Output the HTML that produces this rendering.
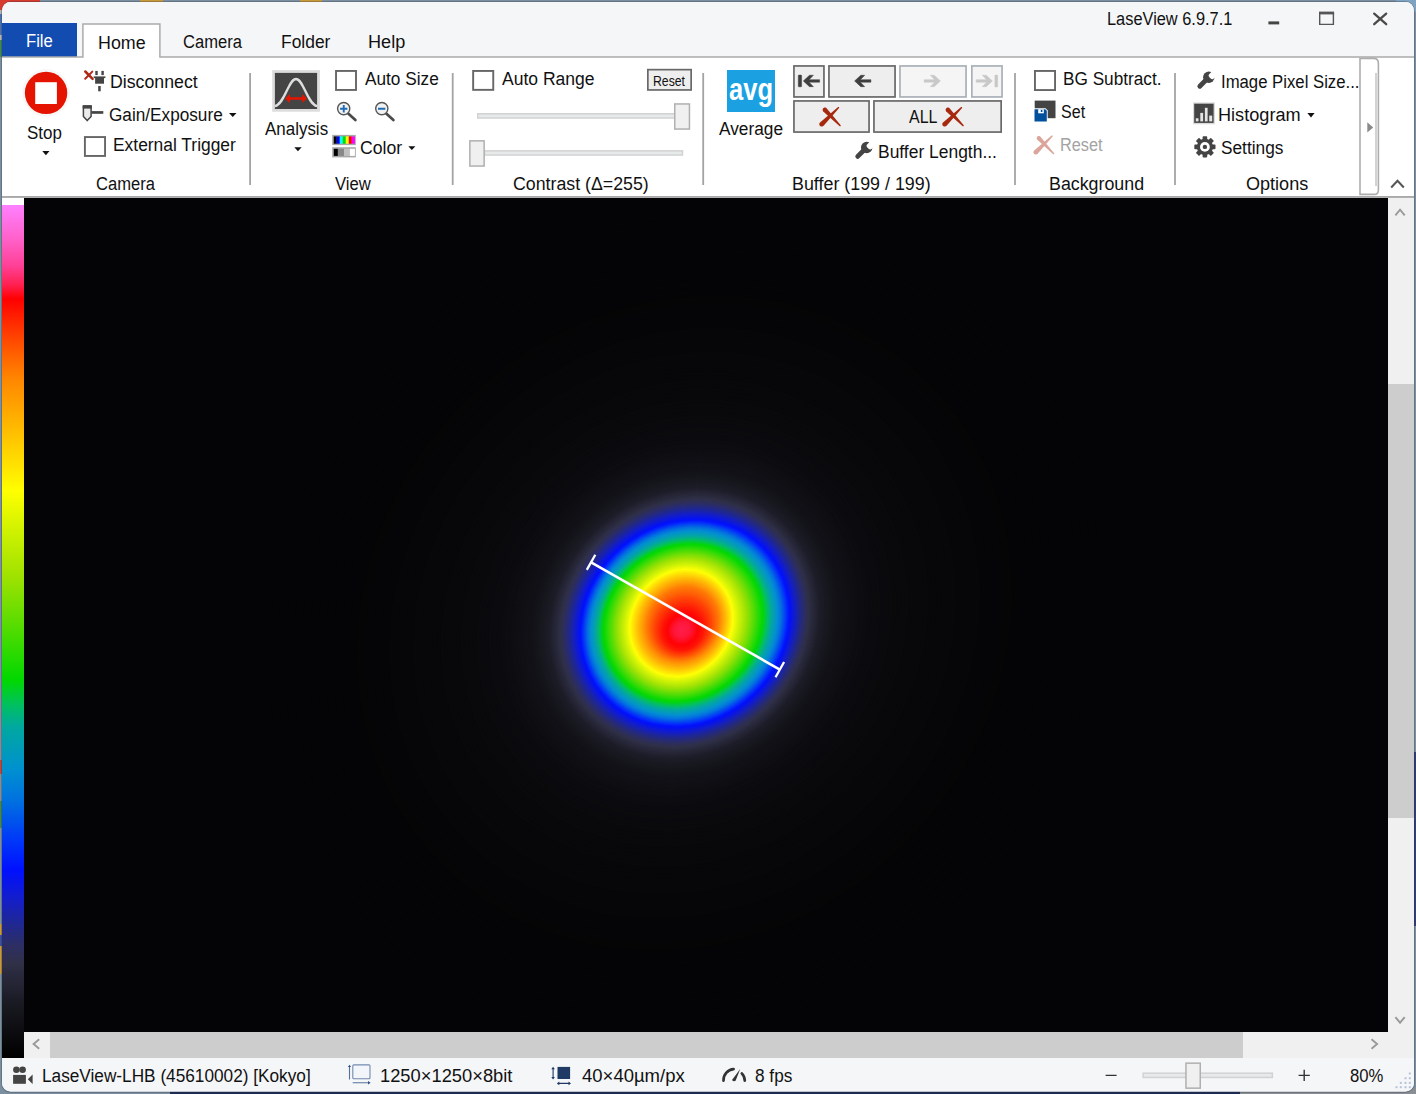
<!DOCTYPE html>
<html lang="en">
<head>
<meta charset="utf-8">
<title>LaseView 6.9.7.1</title>
<style>
html,body{margin:0;padding:0;}
body{width:1416px;height:1094px;overflow:hidden;position:relative;background:#7b8fa1;font-family:"Liberation Sans",sans-serif;}
.abs,.t,svg.i{position:absolute;}
.t{white-space:nowrap;transform-origin:0 0;display:block;}
#desktop{position:absolute;left:0;top:0;width:1416px;height:1094px;background:#7b8fa1;overflow:hidden;}
#win{position:absolute;left:0;top:0;width:1416px;height:1094px;background:#f5f6f8;clip-path:inset(2px 2px 2.5px 2px round 8.5px);}
#titlebar{left:0;top:0;width:1416px;height:57px;background:#f5f6f8;}
#ribbon{left:0;top:57px;width:1416px;height:140px;background:#fff;}
#filetab{left:2px;top:23px;width:74.8px;height:33.7px;background:#124cb0;}
#hometab{left:83px;top:24px;width:77px;height:34px;background:#fff;}
.trk{height:3.8px;border:1px solid #d6d6d6;background:#e7e7e7;}
.thm{box-sizing:border-box;border:1px solid #c4c4c4;background:#f0f0f0;}
#viewer{left:2px;top:198px;width:1412px;height:860px;background:#f0f0f0;}
#cbar{left:2px;top:198px;width:22.2px;height:860px;background:#fff;}
#cbar i{position:absolute;left:0;top:7px;width:22.2px;height:853px;background:linear-gradient(to bottom, #ff80ff 0px, #ff60c8 35px, #ff4096 61px, #ff2050 80px, #ff0000 94px, #ff3000 121px, #ff6000 149px, #ff8800 175px, #ffa800 206px, #ffc800 236px, #ffe800 266px, #ffff00 286px, #d0f200 325px, #a0e200 371px, #50dc00 425px, #00d800 475px, #00c060 500px, #00a8a0 522px, #0090d0 565px, #0070e0 596px, #0038f8 635px, #0010ff 665px, #141ec8 695px, #202890 720px, #2c2e64 740px, #303048 758px, #181820 802px, #000000 853px);}
#img{left:24.2px;top:198px;width:1363.8px;height:834px;background:#040406;overflow:hidden;}
#vscroll{left:1388px;top:198px;width:26px;height:834px;background:#f0f0f0;}
#hscroll{left:24.2px;top:1032px;width:1363.8px;height:26px;background:#f0f0f0;}
#status{left:0;top:1058px;width:1416px;height:36px;background:#f5f6f8;}
</style>
</head>
<body>
<div id="desktop">
<div class="abs" style="left:0;top:0;width:40px;height:14px;background:#d63b2e"></div>
<div class="abs" style="left:140px;top:0;width:23px;height:3px;background:#c8993a"></div>
<div class="abs" style="left:300px;top:0;width:22px;height:3px;background:#c8993a"></div>
<div class="abs" style="left:0;top:10px;width:3px;height:4px;background:#b4b4b4"></div>
<div class="abs" style="left:0;top:14px;width:3px;height:21px;background:#4a72b3"></div>
<div class="abs" style="left:0;top:35px;width:3px;height:5px;background:#b4b4b4"></div>
<div class="abs" style="left:0;top:40px;width:3px;height:17px;background:#3f8a52"></div>
<div class="abs" style="left:0;top:760px;width:3px;height:14px;background:#c0473a"></div>
<div class="abs" style="left:0;top:801px;width:3px;height:27px;background:#3f8a52"></div>
<div class="abs" style="left:0;top:924px;width:3px;height:11px;background:#c8993a"></div>
<div class="abs" style="left:0;top:935px;width:3px;height:11px;background:#3a50a0"></div>
<div class="abs" style="left:0;top:946px;width:3px;height:28px;background:#c8993a"></div>
<div class="abs" style="left:1396px;top:0;width:20px;height:12px;background:#7fa3c0"></div>
<div class="abs" style="left:1412px;top:752px;width:4px;height:174px;background:#2e3f74"></div>
<div class="abs" style="left:170px;top:1088px;width:1070px;height:6px;background:#1c2b55"></div>
<div class="abs" style="left:1240px;top:1088px;width:176px;height:6px;background:#8a8f96"></div>

<div class="abs" style="left:1px;top:1px;width:1414px;height:1091.6px;border-radius:10px;background:rgba(40,45,60,0.28)"></div>
</div>
<div id="win">
<div id="titlebar" class="abs"></div>
<div id="ribbon" class="abs"></div>
<div id="filetab" class="abs"></div>
<div id="hometab" class="abs"></div>
<!-- title bar controls -->
<svg class="i" style="left:1260px;top:6px" width="140" height="26" viewBox="1260 6 140 26">
  <rect x="1268.4" y="21.4" width="10.8" height="3" fill="#444"/>
  <path d="M1319.7 13.4H1333.4V24.4H1319.7Z" fill="none" stroke="#555" stroke-width="1.4"/>
  <rect x="1319" y="11.6" width="15.1" height="2.8" fill="#555"/>
  <path d="M1374.2 13.6L1386.2 24.2M1386.2 13.6L1374.2 24.2" stroke="#4a4a4a" stroke-width="2.3" stroke-linecap="round" fill="none"/>
</svg>

<!-- ribbon chrome: borders, separators, checkboxes, buttons, sliders -->
<svg class="i" id="chrome" style="left:0;top:0" width="1416" height="200" viewBox="0 0 1416 200">
<path d="M2 56.9H82.9V23.9H159.9V56.9H1414" fill="none" stroke="#ababab" stroke-width="1.5"/>
<rect x="2" y="196" width="1412" height="1.9" fill="#a9a9a9"/>
<rect x="249.20" y="73" width="1.8" height="112" fill="#a3a3a3"/>
<rect x="451.80" y="73" width="1.8" height="112" fill="#a3a3a3"/>
<rect x="702.30" y="73" width="1.8" height="112" fill="#a3a3a3"/>
<rect x="1014.10" y="73" width="1.8" height="112" fill="#a3a3a3"/>
<rect x="1174.10" y="73" width="1.8" height="112" fill="#a3a3a3"/>
<rect x="84.90" y="137.05" width="20.15" height="18.90" fill="#fff" stroke="#666" stroke-width="1.9"/>
<rect x="336.03" y="70.95" width="19.97" height="19.00" fill="#fff" stroke="#666" stroke-width="1.9"/>
<rect x="473.15" y="70.95" width="20.10" height="18.90" fill="#fff" stroke="#666" stroke-width="1.9"/>
<rect x="1034.95" y="70.95" width="20.10" height="19.10" fill="#fff" stroke="#666" stroke-width="1.9"/>
<rect x="647.85" y="69.65" width="43.30" height="20.30" fill="#eeeeee" stroke="#686868" stroke-width="1.7"/>
<rect x="477.75" y="113.75" width="197" height="4.3" fill="#e7eaea" stroke="#d2d2d2" stroke-width="1.5"/>
<rect x="674.75" y="103.95" width="14.7" height="25.1" fill="#f0f0f0" stroke="#b0b0b0" stroke-width="1.5"/>
<rect x="484.5" y="150.85" width="198" height="4.2" fill="#e7eaea" stroke="#d2d2d2" stroke-width="1.5"/>
<rect x="469.85" y="140.85" width="14.3" height="25.2" fill="#f0f0f0" stroke="#b0b0b0" stroke-width="1.5"/>
<rect x="793.95" y="65.95" width="30.00" height="31.00" fill="#eeeeee" stroke="#686868" stroke-width="1.7"/>
<rect x="828.95" y="65.95" width="66.10" height="31.00" fill="#eeeeee" stroke="#686868" stroke-width="1.7"/>
<rect x="899.95" y="65.95" width="66.10" height="31.00" fill="#f5f5f5" stroke="#a9b1b8" stroke-width="1.7"/>
<rect x="971.85" y="65.95" width="30.20" height="31.00" fill="#f5f5f5" stroke="#a9b1b8" stroke-width="1.7"/>
<rect x="793.95" y="100.95" width="75.10" height="31.10" fill="#eeeeee" stroke="#686868" stroke-width="1.7"/>
<rect x="873.95" y="100.95" width="127.20" height="31.10" fill="#eeeeee" stroke="#686868" stroke-width="1.7"/>
<path d="M1360 58.4V194.4H1374.2Q1378.4 194.4 1378.4 190.2V63.2Q1378.4 58.4 1373.6 58.4Z" fill="#fff" stroke="#adadad" stroke-width="1.6"/>
</svg>

<!-- ===== Camera group ===== -->
<svg class="i" style="left:20px;top:66px" width="54" height="54" viewBox="20 66 54 54">
  <circle cx="46.05" cy="92.9" r="23.8" fill="#f7f7f7"/>
  <circle cx="46.05" cy="92.9" r="21.2" fill="#e51400"/>
  <rect x="35.2" y="82.2" width="21.7" height="21.8" fill="#fff"/>
</svg>
<svg class="i" style="left:40px;top:149px" width="12" height="8" viewBox="40 149 12 8"><path d="M42.3 151H49.5L45.9 155.3Z" fill="#111"/></svg>
<!-- disconnect icon -->
<svg class="i" style="left:82px;top:68px" width="26" height="26" viewBox="82 68 26 26">
  <path d="M85.3 71.5L92.6 78.9" stroke="#b02a17" stroke-width="2.5" stroke-linecap="round"/>
  <path d="M92.3 71.6L85.2 78.8" stroke="#b02a17" stroke-width="2" stroke-linecap="round"/>
  <rect x="95.3" y="70.9" width="2.4" height="4.2" fill="#444"/>
  <rect x="101.4" y="70.9" width="2.4" height="4.2" fill="#444"/>
  <rect x="93.7" y="76.4" width="11.7" height="1.7" fill="#444"/>
  <rect x="95.1" y="78" width="8.9" height="5.7" fill="#444"/>
  <rect x="98.2" y="86" width="2.5" height="5.3" fill="#444"/>
</svg>
<!-- gain icon -->
<svg class="i" style="left:80px;top:103px" width="26" height="21" viewBox="80 103 26 21">
  <path d="M83.4 106V116.5L87.2 120.6L91.1 116.5V106Z" fill="#ebebeb" stroke="#444" stroke-width="1.5" stroke-linejoin="round"/>
  <rect x="82.7" y="105.3" width="9.1" height="3.3" fill="#444"/>
  <rect x="91.5" y="111.1" width="11.8" height="2.7" fill="#444"/>
</svg>
<svg class="i" style="left:227px;top:111px" width="12" height="8" viewBox="227 111 12 8"><path d="M229 113.1H236.5L232.75 117Z" fill="#111"/></svg>

<!-- ===== View group ===== -->
<svg class="i" style="left:270px;top:68px" width="52" height="46" viewBox="270 68 52 46">
  <rect x="272.2" y="70.1" width="47.7" height="41.6" fill="#dcdcdc"/>
  <rect x="274.9" y="72.9" width="42.2" height="36.1" fill="#444"/>
  <path d="M274.9 106.2C285 103.5 288.5 79 296 79C303.5 79 307 103.5 317.1 106.2" fill="none" stroke="#dedede" stroke-width="2.3"/>
  <path d="M285.1 98.5L290 93.9V97.15H302.3V93.9L306.9 98.5L302.3 103V99.85H290V103Z" fill="#e51400"/>
</svg>
<svg class="i" style="left:292px;top:145px" width="12" height="8" viewBox="292 145 12 8"><path d="M294.3 147.3H301.6L297.95 151.2Z" fill="#111"/></svg>
<!-- zoom in / out -->
<svg class="i" style="left:334px;top:99px" width="64" height="24" viewBox="334 99 64 24">
  <path d="M348.2 113.4L355.4 120" stroke="#4a4a4a" stroke-width="2.7" stroke-linecap="round"/>
  <circle cx="343.7" cy="108.6" r="6.1" fill="#f2f2f2" stroke="#555" stroke-width="1.4"/>
  <path d="M340.1 108.7H347.4M343.75 105V112.4" stroke="#1e6bb8" stroke-width="1.9"/>
  <path d="M386.2 113.4L393.4 120" stroke="#4a4a4a" stroke-width="2.7" stroke-linecap="round"/>
  <circle cx="381.8" cy="108.6" r="6.1" fill="#f2f2f2" stroke="#555" stroke-width="1.4"/>
  <path d="M378 108.7H385.4" stroke="#1e6bb8" stroke-width="1.9"/>
</svg>
<!-- colour icon -->
<svg class="i" style="left:331px;top:134px" width="26" height="25" viewBox="331 134 26 25">
  <rect x="332.2" y="134.9" width="23.6" height="10.2" fill="#a8a8a8"/>
  <rect x="333.8" y="136.4" width="3" height="7.3" fill="#000"/>
  <rect x="336.8" y="136.4" width="3" height="7.3" fill="#0000ff"/>
  <rect x="339.8" y="136.4" width="3" height="7.3" fill="#00ffff"/>
  <rect x="342.8" y="136.4" width="3" height="7.3" fill="#00e000"/>
  <rect x="345.8" y="136.4" width="3" height="7.3" fill="#ffff00"/>
  <rect x="348.8" y="136.4" width="3" height="7.3" fill="#ff0000"/>
  <rect x="351.8" y="136.4" width="3.1" height="7.3" fill="#ff00ff"/>
  <rect x="332.2" y="147.2" width="23.6" height="10.2" fill="#a8a8a8"/>
  <rect x="333.8" y="148.8" width="4.1" height="7.1" fill="#000"/>
  <rect x="337.9" y="148.8" width="6.1" height="7.1" fill="#888"/>
  <rect x="344" y="148.8" width="5.9" height="7.1" fill="#c0c0c0"/>
  <rect x="349.9" y="148.8" width="5" height="7.1" fill="#fff"/>
</svg>
<svg class="i" style="left:406px;top:144px" width="12" height="8" viewBox="406 144 12 8"><path d="M408.3 146.2H415.4L411.85 150.1Z" fill="#111"/></svg>

<!-- ===== Contrast group ===== -->

<!-- ===== Buffer group ===== -->
<div class="abs" style="left:727.1px;top:70px;width:48px;height:41.8px;background:#1ba1e2"></div>
<svg class="i" style="left:795px;top:70px" width="206" height="60" viewBox="795 70 206 60">
  <g fill="#3f3f3f" stroke="#3f3f3f" stroke-width="0.5" stroke-linejoin="round">
    <rect x="798.3" y="75.1" width="3.3" height="11.7" rx="0.6"/>
    <path d="M803.30 80.95L809.50 75.25L813.40 75.25L809.05 79.70L819.60 79.70L819.60 82.20L809.05 82.20L813.40 86.65L809.50 86.65Z"/>
    <path d="M854.60 80.95L860.80 75.25L864.70 75.25L860.35 79.70L870.90 79.70L870.90 82.20L860.35 82.20L864.70 86.65L860.80 86.65Z"/>
  </g>
  <g fill="#c8c8c8" stroke="#c8c8c8" stroke-width="0.5" stroke-linejoin="round">
    <path d="M940.40 80.95L934.20 75.25L930.30 75.25L934.65 79.70L924.10 79.70L924.10 82.20L934.65 82.20L930.30 86.65L934.20 86.65Z"/>
    <path d="M992.40 80.95L986.20 75.25L982.30 75.25L986.65 79.70L976.10 79.70L976.10 82.20L986.65 82.20L982.30 86.65L986.20 86.65Z"/>
    <rect x="994.9" y="75.1" width="2.8" height="11.9" rx="0.5"/>
  </g>
  <g id="redx" fill="#a5280f">
    <path d="M823.24 111.39L822.83 110.80L822.62 110.11L822.64 109.39L822.87 108.71L823.31 108.14L823.90 107.73L824.59 107.52L825.31 107.54L825.99 107.77L826.56 108.21L840.71 125.32L840.68 126.31L839.69 126.28Z"/>
    <path d="M823.38 125.91L822.77 126.35L822.05 126.57L821.30 126.57L820.59 126.33L819.99 125.88L819.55 125.27L819.33 124.55L819.33 123.80L819.57 123.09L820.02 122.49L838.11 107.10L839.10 107.11L839.09 108.10Z"/>
  </g>
  <use href="#redx" x="123" y="0"/>
</svg>
<!-- wrench (buffer length) -->
<svg class="i" style="left:853px;top:140px" width="22" height="21" viewBox="853 140 22 21">
  <g id="wrench" transform="translate(855 142)">
    <path d="M2.7 14.4L9.6 7.5" stroke="#444" stroke-width="4.8" stroke-linecap="round" fill="none"/>
    <circle cx="11.7" cy="5.5" r="5.7" fill="#444"/>
    <path d="M12.3 2.2L16 -1.5L20.5 3L16.8 6.7A2.25 2.25 0 0 1 13.6 6.7L12.3 5.4A2.25 2.25 0 0 1 12.3 2.2Z" fill="#fff"/>
  </g>
</svg>

<!-- ===== Background group ===== -->
<svg class="i" style="left:1032px;top:99px" width="26" height="24" viewBox="1032 99 26 24">
  <rect x="1034.7" y="100.6" width="20.8" height="17.6" fill="#444"/>
  <path d="M1033.6 108.3H1045.6L1047.7 110.4V122.3H1033.6Z" fill="#fff"/>
  <path d="M1034.5 109.2H1045.2L1046.8 110.8V121.4H1034.5Z" fill="#00509e"/>
  <rect x="1038.2" y="109.2" width="5.6" height="4.1" fill="#fff"/>
  <rect x="1040.8" y="109.8" width="1.6" height="2.2" fill="#00509e"/>
</svg>
<svg class="i" style="left:1031px;top:133px" width="26" height="24" viewBox="1031 133 26 24">
  <g fill="#dba59b" transform="translate(1033.3 135.2) scale(0.965 0.975) translate(-819.1 -106.7)">
    <path d="M823.24 111.39L822.83 110.80L822.62 110.11L822.64 109.39L822.87 108.71L823.31 108.14L823.90 107.73L824.59 107.52L825.31 107.54L825.99 107.77L826.56 108.21L840.71 125.32L840.68 126.31L839.69 126.28Z"/>
    <path d="M823.38 125.91L822.77 126.35L822.05 126.57L821.30 126.57L820.59 126.33L819.99 125.88L819.55 125.27L819.33 124.55L819.33 123.80L819.57 123.09L820.02 122.49L838.11 107.10L839.10 107.11L839.09 108.10Z"/>
  </g>
</svg>

<!-- ===== Options group ===== -->
<svg class="i" style="left:1195px;top:70px" width="22" height="21" viewBox="1195 70 22 21">
  <use href="#wrench" x="342.1" y="-70.2"/>
</svg>
<svg class="i" style="left:1192px;top:101px" width="25" height="25" viewBox="1192 101 25 25">
  <rect x="1193" y="102.4" width="22" height="21.9" fill="#d9d9d9"/>
  <rect x="1194.2" y="103.7" width="19.4" height="19.2" fill="#444"/>
  <rect x="1195.8" y="118.3" width="2.7" height="3.1" fill="#e4e4e4"/>
  <rect x="1200.3" y="112.9" width="2.8" height="8.5" fill="#e4e4e4"/>
  <rect x="1204.9" y="107.8" width="2.7" height="13.6" fill="#e4e4e4"/>
  <rect x="1209.2" y="115.6" width="3" height="5.8" fill="#e4e4e4"/>
</svg>
<svg class="i" style="left:1306px;top:111px" width="12" height="8" viewBox="1306 111 12 8"><path d="M1307.4 113H1314.6L1311 117.4Z" fill="#111"/></svg>
<svg class="i" style="left:1192px;top:134px" width="26" height="26" viewBox="1192 134 26 26">
  <g transform="translate(1204.9 146.9)" fill="#444">
    <g id="tooth"><rect x="-2.3" y="-10.6" width="4.6" height="21.2" rx="0.8"/></g>
    <use href="#tooth" transform="rotate(45)"/>
    <use href="#tooth" transform="rotate(90)"/>
    <use href="#tooth" transform="rotate(135)"/>
    <circle r="8.1"/>
    <circle r="4.9" fill="#fff"/>
    <circle r="2.2"/>
  </g>
</svg>

<!-- ribbon scroll button & collapse chevron -->
<div class="abs" style="left:1374.8px;top:73px;width:1.8px;height:112.5px;background:#d2d2d2"></div>
<svg class="i" style="left:1365px;top:120px" width="12" height="14" viewBox="1365 120 12 14"><path d="M1367.3 122.3L1373.2 127.4L1367.3 132.5Z" fill="#8a8a8a"/></svg>
<svg class="i" style="left:1388px;top:176px" width="20" height="14" viewBox="1388 176 20 14"><path d="M1391.2 187.4L1397.5 180.8L1403.8 187.4" fill="none" stroke="#555" stroke-width="2.1"/></svg>

<div id="viewer" class="abs"></div>
<div id="cbar" class="abs"><i></i></div>
<div id="img" class="abs">
<svg class="i" style="left:0;top:0" width="1363.8" height="834" viewBox="24.2 198 1363.8 834">
  <rect x="24" y="198" width="1364" height="834" fill="#040406"/>
  <g id="beam" transform="translate(684 623) rotate(-45) scale(1.045 0.952) rotate(45) translate(-683 -622)"><ellipse cx="683.7" cy="622.0" rx="416.0" ry="416.0" fill="#040406"/><ellipse cx="683.7" cy="622.0" rx="408.0" ry="408.0" fill="#040406"/><ellipse cx="683.7" cy="622.0" rx="400.0" ry="400.0" fill="#040406"/><ellipse cx="683.7" cy="622.0" rx="392.0" ry="392.0" fill="#040406"/><ellipse cx="683.7" cy="622.0" rx="384.0" ry="384.0" fill="#040406"/><ellipse cx="683.7" cy="622.0" rx="376.0" ry="376.0" fill="#040406"/><ellipse cx="683.7" cy="622.0" rx="368.0" ry="368.0" fill="#040406"/><ellipse cx="683.7" cy="622.0" rx="360.0" ry="360.0" fill="#040406"/><ellipse cx="683.7" cy="622.0" rx="352.0" ry="352.0" fill="#040406"/><ellipse cx="683.7" cy="622.0" rx="344.0" ry="344.0" fill="#040406"/><ellipse cx="683.7" cy="622.0" rx="336.0" ry="336.0" fill="#040406"/><ellipse cx="683.7" cy="622.0" rx="328.0" ry="328.0" fill="#050506"/><ellipse cx="683.7" cy="622.0" rx="320.0" ry="320.0" fill="#050507"/><ellipse cx="683.7" cy="622.0" rx="312.0" ry="312.0" fill="#050507"/><ellipse cx="683.7" cy="622.0" rx="304.0" ry="304.0" fill="#050507"/><ellipse cx="683.7" cy="622.0" rx="296.0" ry="296.0" fill="#060608"/><ellipse cx="683.7" cy="622.0" rx="288.0" ry="288.0" fill="#060608"/><ellipse cx="683.7" cy="622.0" rx="280.0" ry="280.0" fill="#060608"/><ellipse cx="683.7" cy="622.0" rx="272.0" ry="272.0" fill="#070709"/><ellipse cx="683.7" cy="622.0" rx="264.0" ry="264.0" fill="#070709"/><ellipse cx="683.7" cy="622.0" rx="256.0" ry="256.0" fill="#070709"/><ellipse cx="683.7" cy="622.0" rx="252.0" ry="252.0" fill="#07070a"/><ellipse cx="683.7" cy="622.0" rx="248.0" ry="248.0" fill="#07070a"/><ellipse cx="683.7" cy="622.0" rx="244.0" ry="244.0" fill="#08080a"/><ellipse cx="683.7" cy="622.0" rx="240.0" ry="240.0" fill="#08080a"/><ellipse cx="683.7" cy="622.0" rx="236.0" ry="236.0" fill="#08080b"/><ellipse cx="683.7" cy="622.0" rx="232.0" ry="232.0" fill="#08080b"/><ellipse cx="683.7" cy="622.0" rx="228.0" ry="228.0" fill="#08080b"/><ellipse cx="683.7" cy="622.0" rx="224.0" ry="224.0" fill="#09090b"/><ellipse cx="683.7" cy="622.0" rx="220.0" ry="220.0" fill="#09090c"/><ellipse cx="683.7" cy="622.0" rx="216.0" ry="216.0" fill="#09090c"/><ellipse cx="683.7" cy="622.0" rx="212.0" ry="212.0" fill="#09090c"/><ellipse cx="683.7" cy="622.0" rx="208.0" ry="208.0" fill="#0a0a0d"/><ellipse cx="683.7" cy="622.0" rx="204.0" ry="204.0" fill="#0a0a0d"/><ellipse cx="683.7" cy="622.0" rx="200.0" ry="200.0" fill="#0a0a0e"/><ellipse cx="683.7" cy="622.0" rx="196.0" ry="196.0" fill="#0b0b0e"/><ellipse cx="683.7" cy="622.0" rx="192.0" ry="192.0" fill="#0b0b0f"/><ellipse cx="683.7" cy="622.0" rx="188.0" ry="188.0" fill="#0b0b0f"/><ellipse cx="683.7" cy="622.0" rx="184.0" ry="184.0" fill="#0c0c10"/><ellipse cx="683.7" cy="622.0" rx="180.0" ry="180.0" fill="#0c0c11"/><ellipse cx="683.7" cy="622.0" rx="176.0" ry="176.0" fill="#0d0d11"/><ellipse cx="683.7" cy="622.0" rx="174.0" ry="174.0" fill="#0e0e12"/><ellipse cx="683.7" cy="622.0" rx="172.0" ry="172.0" fill="#0e0e13"/><ellipse cx="683.7" cy="622.0" rx="170.0" ry="170.0" fill="#0e0e13"/><ellipse cx="683.7" cy="622.0" rx="168.0" ry="168.0" fill="#0f0f14"/><ellipse cx="683.7" cy="622.0" rx="166.0" ry="166.0" fill="#0f0f14"/><ellipse cx="683.7" cy="622.0" rx="164.0" ry="164.0" fill="#101015"/><ellipse cx="683.7" cy="622.0" rx="162.0" ry="162.0" fill="#101016"/><ellipse cx="683.7" cy="622.0" rx="160.0" ry="160.0" fill="#111116"/><ellipse cx="683.7" cy="622.0" rx="158.0" ry="158.0" fill="#111117"/><ellipse cx="683.7" cy="622.0" rx="156.0" ry="156.0" fill="#111117"/><ellipse cx="683.7" cy="622.0" rx="154.0" ry="154.0" fill="#121218"/><ellipse cx="683.7" cy="622.0" rx="152.0" ry="152.0" fill="#131319"/><ellipse cx="683.7" cy="622.0" rx="150.0" ry="150.0" fill="#14141b"/><ellipse cx="683.7" cy="622.0" rx="148.0" ry="148.0" fill="#15151c"/><ellipse cx="683.7" cy="622.0" rx="146.0" ry="146.0" fill="#17171e"/><ellipse cx="683.7" cy="622.0" rx="144.0" ry="144.0" fill="#181820"/><ellipse cx="683.7" cy="622.0" rx="142.0" ry="142.0" fill="#191922"/><ellipse cx="683.7" cy="622.0" rx="140.0" ry="140.0" fill="#1b1b25"/><ellipse cx="683.7" cy="622.0" rx="138.0" ry="138.0" fill="#1c1c26"/><ellipse cx="683.7" cy="622.0" rx="137.0" ry="137.0" fill="#1d1d28"/><ellipse cx="683.7" cy="622.0" rx="136.0" ry="136.0" fill="#1d1d29"/><ellipse cx="683.7" cy="622.0" rx="135.0" ry="135.0" fill="#1f1f2b"/><ellipse cx="683.7" cy="622.0" rx="134.0" ry="134.0" fill="#20202e"/><ellipse cx="683.7" cy="622.0" rx="133.0" ry="133.0" fill="#222230"/><ellipse cx="683.7" cy="622.0" rx="132.0" ry="132.0" fill="#242433"/><ellipse cx="683.7" cy="622.0" rx="131.0" ry="131.0" fill="#252536"/><ellipse cx="683.7" cy="622.0" rx="130.0" ry="130.0" fill="#272739"/><ellipse cx="683.7" cy="622.0" rx="129.0" ry="129.0" fill="#29293c"/><ellipse cx="683.7" cy="622.0" rx="128.0" ry="128.0" fill="#2a2a3e"/><ellipse cx="683.7" cy="622.0" rx="127.0" ry="127.0" fill="#2c2c41"/><ellipse cx="683.7" cy="622.0" rx="126.0" ry="126.0" fill="#2e2e44"/><ellipse cx="683.7" cy="622.0" rx="125.0" ry="125.0" fill="#2f2f47"/><ellipse cx="683.7" cy="622.0" rx="124.0" ry="124.0" fill="#2f304c"/><ellipse cx="683.7" cy="622.0" rx="123.0" ry="123.0" fill="#2f2f52"/><ellipse cx="683.8" cy="622.0" rx="122.1" ry="121.9" fill="#2e2f59"/><ellipse cx="683.8" cy="622.0" rx="121.1" ry="120.9" fill="#2d2e5f"/><ellipse cx="683.8" cy="622.1" rx="120.1" ry="119.9" fill="#2b2e66"/><ellipse cx="683.8" cy="622.1" rx="119.1" ry="118.9" fill="#292c6f"/><ellipse cx="683.9" cy="622.1" rx="118.2" ry="117.8" fill="#272b78"/><ellipse cx="683.9" cy="622.1" rx="117.2" ry="116.8" fill="#242a81"/><ellipse cx="683.9" cy="622.1" rx="116.2" ry="115.8" fill="#22298a"/><ellipse cx="683.9" cy="622.1" rx="115.2" ry="114.8" fill="#1f2793"/><ellipse cx="684.0" cy="622.1" rx="114.3" ry="113.7" fill="#1d269e"/><ellipse cx="684.0" cy="622.2" rx="113.3" ry="112.7" fill="#1b24a9"/><ellipse cx="684.0" cy="622.2" rx="112.3" ry="111.7" fill="#1822b4"/><ellipse cx="684.0" cy="622.2" rx="111.3" ry="110.7" fill="#161fc0"/><ellipse cx="684.1" cy="622.2" rx="110.3" ry="109.7" fill="#131dcb"/><ellipse cx="684.1" cy="622.2" rx="109.4" ry="108.6" fill="#101bd4"/><ellipse cx="684.1" cy="622.2" rx="108.4" ry="107.6" fill="#0c19dd"/><ellipse cx="684.1" cy="622.3" rx="107.4" ry="106.6" fill="#0916e7"/><ellipse cx="684.2" cy="622.3" rx="106.4" ry="105.6" fill="#0514f0"/><ellipse cx="684.2" cy="622.3" rx="105.4" ry="104.6" fill="#0411f9"/><ellipse cx="684.2" cy="622.3" rx="104.5" ry="103.5" fill="#0415fe"/><ellipse cx="684.1" cy="622.3" rx="103.5" ry="102.5" fill="#0421fc"/><ellipse cx="684.0" cy="622.3" rx="102.5" ry="101.5" fill="#042dfa"/><ellipse cx="684.0" cy="622.3" rx="101.5" ry="100.5" fill="#043af7"/><ellipse cx="683.9" cy="622.2" rx="100.5" ry="99.5" fill="#0447f2"/><ellipse cx="683.8" cy="622.2" rx="99.5" ry="98.5" fill="#0454ec"/><ellipse cx="683.7" cy="622.2" rx="98.5" ry="97.5" fill="#0461e6"/><ellipse cx="683.6" cy="622.2" rx="97.5" ry="96.5" fill="#046ee1"/><ellipse cx="683.6" cy="622.2" rx="96.5" ry="95.5" fill="#0478dc"/><ellipse cx="683.5" cy="622.2" rx="95.5" ry="94.5" fill="#0480d8"/><ellipse cx="683.4" cy="622.1" rx="94.5" ry="93.5" fill="#0489d4"/><ellipse cx="683.3" cy="622.1" rx="93.5" ry="92.5" fill="#0491cf"/><ellipse cx="683.2" cy="622.1" rx="92.5" ry="91.5" fill="#0495c5"/><ellipse cx="683.2" cy="622.1" rx="91.5" ry="90.5" fill="#049abc"/><ellipse cx="683.1" cy="622.1" rx="90.5" ry="89.5" fill="#049fb3"/><ellipse cx="683.0" cy="622.1" rx="89.5" ry="88.5" fill="#04a3a9"/><ellipse cx="682.9" cy="622.0" rx="88.5" ry="87.5" fill="#04a8a0"/><ellipse cx="682.8" cy="622.0" rx="87.5" ry="86.5" fill="#04ae90"/><ellipse cx="682.8" cy="622.0" rx="86.5" ry="85.5" fill="#04b47f"/><ellipse cx="682.7" cy="622.0" rx="85.5" ry="84.5" fill="#04bb6e"/><ellipse cx="682.6" cy="622.0" rx="84.5" ry="83.5" fill="#04c15d"/><ellipse cx="682.5" cy="622.0" rx="83.5" ry="82.5" fill="#04c647"/><ellipse cx="682.4" cy="621.9" rx="82.5" ry="81.5" fill="#04cc32"/><ellipse cx="682.4" cy="621.9" rx="81.5" ry="80.5" fill="#04d11c"/><ellipse cx="682.3" cy="621.9" rx="80.5" ry="79.5" fill="#04d706"/><ellipse cx="682.2" cy="621.9" rx="79.5" ry="78.5" fill="#08d806"/><ellipse cx="682.1" cy="621.9" rx="78.4" ry="77.6" fill="#13d906"/><ellipse cx="682.1" cy="621.9" rx="77.3" ry="76.7" fill="#1fda06"/><ellipse cx="682.0" cy="621.9" rx="76.2" ry="75.8" fill="#2ada06"/><ellipse cx="681.9" cy="621.9" rx="75.2" ry="74.8" fill="#35db06"/><ellipse cx="681.9" cy="621.9" rx="74.1" ry="73.9" fill="#40db06"/><ellipse cx="681.8" cy="621.9" rx="73.0" ry="73.0" fill="#4bdc06"/><ellipse cx="681.8" cy="621.9" rx="71.9" ry="72.1" fill="#56dc06"/><ellipse cx="681.7" cy="621.9" rx="70.9" ry="71.1" fill="#61dd06"/><ellipse cx="681.6" cy="621.9" rx="69.8" ry="70.2" fill="#6bde06"/><ellipse cx="681.6" cy="621.9" rx="68.7" ry="69.3" fill="#75df06"/><ellipse cx="681.5" cy="621.9" rx="67.7" ry="68.3" fill="#80e006"/><ellipse cx="681.4" cy="621.9" rx="66.6" ry="67.4" fill="#8ae006"/><ellipse cx="681.4" cy="621.9" rx="65.6" ry="66.5" fill="#94e106"/><ellipse cx="681.3" cy="621.9" rx="64.5" ry="65.5" fill="#9fe206"/><ellipse cx="681.2" cy="621.9" rx="63.4" ry="64.6" fill="#a7e406"/><ellipse cx="681.2" cy="621.9" rx="62.4" ry="63.6" fill="#aee706"/><ellipse cx="681.1" cy="621.9" rx="61.3" ry="62.7" fill="#b6e906"/><ellipse cx="681.0" cy="621.9" rx="60.3" ry="61.7" fill="#bdec06"/><ellipse cx="681.0" cy="621.9" rx="59.2" ry="60.8" fill="#c4ee06"/><ellipse cx="680.9" cy="621.9" rx="58.2" ry="59.8" fill="#ccf106"/><ellipse cx="680.9" cy="621.9" rx="57.1" ry="58.9" fill="#d4f306"/><ellipse cx="680.8" cy="621.9" rx="56.1" ry="57.9" fill="#ddf506"/><ellipse cx="680.7" cy="621.9" rx="55.1" ry="57.0" fill="#e5f806"/><ellipse cx="680.7" cy="621.9" rx="54.0" ry="56.0" fill="#eefa06"/><ellipse cx="680.6" cy="621.9" rx="53.0" ry="55.0" fill="#f6fd06"/><ellipse cx="680.5" cy="621.9" rx="52.0" ry="54.1" fill="#ffff06"/><ellipse cx="680.5" cy="621.9" rx="51.0" ry="53.1" fill="#fff606"/><ellipse cx="680.6" cy="622.0" rx="50.0" ry="52.0" fill="#ffed06"/><ellipse cx="680.7" cy="622.0" rx="49.1" ry="50.9" fill="#ffe406"/><ellipse cx="680.8" cy="622.0" rx="48.1" ry="49.9" fill="#ffdc06"/><ellipse cx="680.9" cy="622.1" rx="47.2" ry="48.8" fill="#ffd406"/><ellipse cx="681.0" cy="622.1" rx="46.2" ry="47.8" fill="#ffcb06"/><ellipse cx="681.1" cy="622.2" rx="45.3" ry="46.7" fill="#ffc306"/><ellipse cx="681.2" cy="622.2" rx="44.3" ry="45.7" fill="#ffbb06"/><ellipse cx="681.3" cy="622.2" rx="43.4" ry="44.7" fill="#ffb306"/><ellipse cx="681.4" cy="622.3" rx="42.4" ry="43.6" fill="#ffab06"/><ellipse cx="681.5" cy="622.3" rx="41.4" ry="42.6" fill="#ffa406"/><ellipse cx="681.6" cy="622.3" rx="40.5" ry="41.5" fill="#ff9c06"/><ellipse cx="681.7" cy="622.4" rx="39.5" ry="40.5" fill="#ff9406"/><ellipse cx="681.8" cy="622.4" rx="38.6" ry="39.4" fill="#ff8d06"/><ellipse cx="681.9" cy="622.5" rx="37.6" ry="38.4" fill="#ff8406"/><ellipse cx="682.0" cy="622.5" rx="36.6" ry="37.4" fill="#ff7b06"/><ellipse cx="682.0" cy="622.9" rx="35.7" ry="36.3" fill="#ff7506"/><ellipse cx="682.1" cy="623.2" rx="34.7" ry="35.3" fill="#ff6e06"/><ellipse cx="682.1" cy="623.6" rx="33.7" ry="34.3" fill="#ff6806"/><ellipse cx="682.1" cy="624.0" rx="32.8" ry="33.3" fill="#ff6106"/><ellipse cx="682.2" cy="624.4" rx="31.8" ry="32.2" fill="#ff5a06"/><ellipse cx="682.2" cy="624.8" rx="30.8" ry="31.2" fill="#ff5306"/><ellipse cx="682.2" cy="625.1" rx="29.8" ry="30.2" fill="#ff4b06"/><ellipse cx="682.2" cy="625.5" rx="28.9" ry="29.1" fill="#ff4506"/><ellipse cx="682.3" cy="625.9" rx="27.9" ry="28.1" fill="#ff3f06"/><ellipse cx="682.3" cy="626.2" rx="26.9" ry="27.1" fill="#ff3906"/><ellipse cx="682.3" cy="626.6" rx="25.9" ry="26.1" fill="#ff3306"/><ellipse cx="682.4" cy="627.0" rx="24.9" ry="25.1" fill="#ff2c06"/><ellipse cx="682.4" cy="627.4" rx="24.0" ry="24.0" fill="#ff2606"/><ellipse cx="682.4" cy="627.8" rx="23.0" ry="23.0" fill="#ff2006"/><ellipse cx="682.5" cy="628.1" rx="22.0" ry="22.0" fill="#ff1a06"/><ellipse cx="682.5" cy="628.5" rx="21.0" ry="21.0" fill="#ff1406"/><ellipse cx="682.4" cy="628.5" rx="20.0" ry="20.0" fill="#ff1106"/><ellipse cx="682.4" cy="628.5" rx="19.0" ry="19.0" fill="#ff0d06"/><ellipse cx="682.3" cy="628.6" rx="18.0" ry="18.0" fill="#ff0906"/><ellipse cx="682.3" cy="628.6" rx="17.0" ry="17.0" fill="#ff0506"/><ellipse cx="682.2" cy="628.6" rx="16.0" ry="16.0" fill="#ff0406"/><ellipse cx="682.1" cy="628.6" rx="15.0" ry="15.0" fill="#ff0409"/><ellipse cx="682.1" cy="628.6" rx="14.0" ry="14.0" fill="#ff0813"/><ellipse cx="682.0" cy="628.7" rx="13.0" ry="13.0" fill="#ff0b1b"/><ellipse cx="681.9" cy="628.7" rx="12.0" ry="12.0" fill="#ff0e22"/><ellipse cx="681.9" cy="628.7" rx="11.0" ry="11.0" fill="#ff1029"/><ellipse cx="681.8" cy="628.7" rx="10.0" ry="10.0" fill="#ff1330"/><ellipse cx="681.8" cy="628.7" rx="9.0" ry="9.0" fill="#ff1638"/><ellipse cx="681.7" cy="628.7" rx="8.0" ry="8.0" fill="#ff183c"/><ellipse cx="681.6" cy="628.8" rx="7.0" ry="7.0" fill="#ff193e"/><ellipse cx="681.6" cy="628.8" rx="6.0" ry="6.0" fill="#ff1a40"/><ellipse cx="681.5" cy="628.8" rx="5.0" ry="5.0" fill="#ff1a42"/><ellipse cx="681.4" cy="628.8" rx="4.0" ry="4.0" fill="#ff1b44"/><ellipse cx="681.4" cy="628.8" rx="3.0" ry="3.0" fill="#ff1c46"/><ellipse cx="681.3" cy="628.9" rx="2.0" ry="2.0" fill="#ff1d47"/><ellipse cx="681.3" cy="628.9" rx="1.0" ry="1.0" fill="#ff1d49"/></g>
  <g stroke="#fff" stroke-width="2.6" fill="none">
    <path d="M591.3 562.3L780 669.6"/>
    <path d="M595.5 554.7L587 569.9" stroke-width="2.3"/>
    <path d="M784.3 662L775.7 677.2" stroke-width="2.3"/>
  </g>
</svg>
</div>
<div id="vscroll" class="abs">
  <div class="abs" style="left:0;top:186px;width:26px;height:434px;background:#cdcdcd"></div>
  <svg class="i" style="left:0;top:0" width="26" height="834" viewBox="0 0 26 834">
    <path d="M7.4 17.3L12.05 11.7L16.7 17.3" fill="none" stroke="#9a9a9a" stroke-width="1.9"/>
    <path d="M7.4 819.1L12.05 824.7L16.7 819.1" fill="none" stroke="#9a9a9a" stroke-width="1.9"/>
  </svg>
</div>
<div id="hscroll" class="abs">
  <div class="abs" style="left:25.8px;top:0;width:1192.8px;height:26px;background:#cdcdcd"></div>
  <svg class="i" style="left:0;top:0" width="1364" height="26" viewBox="0 0 1364 26">
    <path d="M15.2 7.3L9.6 12L15.2 16.7" fill="none" stroke="#9a9a9a" stroke-width="1.9"/>
    <path d="M1347.5 7.3L1353.1 12L1347.5 16.7" fill="none" stroke="#9a9a9a" stroke-width="1.9"/>
  </svg>
</div>

<div id="status" class="abs"></div>
<!-- camera icon -->
<svg class="i" style="left:10px;top:1064px" width="26" height="22" viewBox="10 1064 26 22">
  <circle cx="16.4" cy="1069.7" r="3.3" fill="#444"/>
  <circle cx="22.6" cy="1069.7" r="3.3" fill="#444"/>
  <rect x="13.1" y="1074.9" width="12.8" height="8.9" fill="#444"/>
  <path d="M27.8 1079.2L32.6 1074.5V1083.9Z" fill="#444"/>
</svg>
<!-- size icon -->
<svg class="i" style="left:346px;top:1062px" width="28" height="25" viewBox="346 1062 28 25">
  <rect x="352.8" y="1064.9" width="17.2" height="13.8" rx="1" fill="#f2f6fb" stroke="#7389ad" stroke-width="1.1"/>
  <path d="M349.5 1066V1079.6" stroke="#56709c" stroke-width="1.1"/>
  <path d="M347.9 1067L349.5 1064.8L351.1 1067Z" fill="#2f4f86"/>
  <path d="M352.7 1082.7H369" stroke="#56709c" stroke-width="1.1"/>
  <path d="M368 1080.9L370.6 1082.7L368 1084.5Z" fill="#2f4f86"/>
</svg>
<!-- pixel size icon -->
<svg class="i" style="left:550px;top:1064px" width="24" height="24" viewBox="550 1064 24 24">
  <rect x="557.5" y="1066.9" width="12.6" height="12.1" fill="#1f3a64"/>
  <path d="M553.1 1068V1078.2" stroke="#1f3a64" stroke-width="1.1"/>
  <path d="M551.3 1069.3L553.1 1066.8L554.9 1069.3ZM551.3 1076.9L553.1 1079.4L554.9 1076.9Z" fill="#1f3a64"/>
  <path d="M558 1083.4H569.8" stroke="#1f3a64" stroke-width="1.1"/>
  <path d="M559.3 1081.6L556.8 1083.4L559.3 1085.2ZM568.5 1081.6L571 1083.4L568.5 1085.2Z" fill="#1f3a64"/>
</svg>
<!-- fps gauge -->
<svg class="i" style="left:720px;top:1064px" width="28" height="20" viewBox="720 1064 28 20">
  <path d="M723.5 1080.6A10.8 10.8 0 0 1 733.6 1069.2" fill="none" stroke="#333" stroke-width="2.7" stroke-linecap="round"/>
  <path d="M741.8 1073.4A10.8 10.8 0 0 1 744.8 1080.6" fill="none" stroke="#333" stroke-width="2.7" stroke-linecap="round"/>
  <path d="M740.2 1069L735.6 1080.8Q733.6 1082 732 1080Z" fill="#333"/>
</svg>
<!-- zoom slider -->
<svg class="i" style="left:1100px;top:1060px" width="220" height="30" viewBox="1100 1060 220 30">
  <rect x="1143.15" y="1073.15" width="129.2" height="4.3" fill="#e7eaea" stroke="#d2d2d2" stroke-width="1.5"/>
  <rect x="1185.95" y="1063.15" width="14.3" height="25" fill="#f0f0f0" stroke="#b0b0b0" stroke-width="1.5"/>
  <path d="M1105.6 1075.4H1116.6" stroke="#333" stroke-width="1.4"/>
  <path d="M1298.6 1075.4H1309.8M1304.2 1069.8V1081" stroke="#333" stroke-width="1.4"/>
</svg>
<!-- resize grip -->
<svg class="i" style="left:1394px;top:1070px" width="20" height="22" viewBox="1394 1070 20 22">
  <g fill="#b7c2d9">
    <rect x="1408.8" y="1072.5" width="2" height="2"/>
    <rect x="1404.5" y="1077.2" width="2" height="2"/><rect x="1408.8" y="1077.2" width="2" height="2"/>
    <rect x="1399.8" y="1081.9" width="2" height="2"/><rect x="1404.5" y="1081.9" width="2" height="2"/><rect x="1408.8" y="1081.9" width="2" height="2"/>
    <rect x="1395.5" y="1086.2" width="2" height="2"/><rect x="1399.8" y="1086.2" width="2" height="2"/><rect x="1404.5" y="1086.2" width="2" height="2"/><rect x="1408.8" y="1086.2" width="2" height="2"/>
  </g>
</svg>

<span class="t" id="t_file" style="left:25.77px;top:32.00px;font-size:18px;line-height:18px;color:#fff;transform:scaleX(0.9252)">File</span>
<span class="t" id="t_home" style="left:98.21px;top:34.00px;font-size:18px;line-height:18px;color:#111;transform:scaleX(0.9914)">Home</span>
<span class="t" id="t_cam" style="left:183.40px;top:33.00px;font-size:18px;line-height:18px;color:#111;transform:scaleX(0.9199)">Camera</span>
<span class="t" id="t_fold" style="left:280.63px;top:33.00px;font-size:18px;line-height:18px;color:#111;transform:scaleX(0.9675)">Folder</span>
<span class="t" id="t_help" style="left:367.59px;top:33.00px;font-size:18px;line-height:18px;color:#111;transform:scaleX(1.0053)">Help</span>
<span class="t" id="t_title" style="left:1107.49px;top:10.00px;font-size:18px;line-height:18px;color:#111;transform:scaleX(0.9096)">LaseView 6.9.7.1</span>
<span class="t" id="t_stop" style="left:27.40px;top:124.00px;font-size:18px;line-height:18px;color:#111;transform:scaleX(0.9428)">Stop</span>
<span class="t" id="t_disc" style="left:109.82px;top:73.00px;font-size:18px;line-height:18px;color:#111;transform:scaleX(0.9848)">Disconnect</span>
<span class="t" id="t_gain" style="left:108.50px;top:106.00px;font-size:18px;line-height:18px;color:#111;transform:scaleX(0.9550)">Gain/Exposure</span>
<span class="t" id="t_ext" style="left:112.73px;top:136.00px;font-size:18px;line-height:18px;color:#111;transform:scaleX(0.9669)">External Trigger</span>
<span class="t" id="g_cam" style="left:96.40px;top:175.00px;font-size:18px;line-height:18px;color:#111;transform:scaleX(0.9199)">Camera</span>
<span class="t" id="t_ana" style="left:265.30px;top:120.00px;font-size:18px;line-height:18px;color:#111;transform:scaleX(0.9414)">Analysis</span>
<span class="t" id="t_auto" style="left:364.80px;top:70.00px;font-size:18px;line-height:18px;color:#111;transform:scaleX(0.9567)">Auto Size</span>
<span class="t" id="t_color" style="left:359.60px;top:139.00px;font-size:18px;line-height:18px;color:#111;transform:scaleX(0.9809)">Color</span>
<span class="t" id="g_view" style="left:335.10px;top:175.00px;font-size:18px;line-height:18px;color:#111;transform:scaleX(0.9247)">View</span>
<span class="t" id="t_arange" style="left:501.50px;top:70.00px;font-size:18px;line-height:18px;color:#111;transform:scaleX(0.9741)">Auto Range</span>
<span class="t" id="t_reset" style="left:653.13px;top:74.00px;font-size:14px;line-height:14px;color:#111;transform:scaleX(0.8744)">Reset</span>
<span class="t" id="g_contrast" style="left:512.60px;top:175.00px;font-size:18px;line-height:18px;color:#111;transform:scaleX(0.9862)">Contrast (Δ=255)</span>
<span class="t" id="t_avg" style="left:719.40px;top:120.00px;font-size:18px;line-height:18px;color:#111;transform:scaleX(0.9594)">Average</span>
<span class="t" id="t_all" style="left:909.10px;top:108.00px;font-size:18px;line-height:18px;color:#111;transform:scaleX(0.8870)">ALL</span>
<span class="t" id="t_buflen" style="left:878.43px;top:143.00px;font-size:18px;line-height:18px;color:#111;transform:scaleX(0.9689)">Buffer Length...</span>
<span class="t" id="g_buffer" style="left:792.01px;top:175.00px;font-size:18px;line-height:18px;color:#111;transform:scaleX(0.9923)">Buffer (199 / 199)</span>
<span class="t" id="t_bgsub" style="left:1062.74px;top:70.00px;font-size:18px;line-height:18px;color:#111;transform:scaleX(0.9560)">BG Subtract.</span>
<span class="t" id="t_set" style="left:1060.80px;top:103.00px;font-size:18px;line-height:18px;color:#111;transform:scaleX(0.8920)">Set</span>
<span class="t" id="t_bgreset" style="left:1060.30px;top:136.00px;font-size:18px;line-height:18px;color:#a3a3a3;transform:scaleX(0.9039)">Reset</span>
<span class="t" id="g_bg" style="left:1048.91px;top:175.00px;font-size:18px;line-height:18px;color:#111;transform:scaleX(0.9899)">Background</span>
<span class="t" id="t_imgpx" style="left:1220.67px;top:73.00px;font-size:18px;line-height:18px;color:#111;transform:scaleX(0.9289)">Image Pixel Size...</span>
<span class="t" id="t_hist" style="left:1218.29px;top:106.00px;font-size:18px;line-height:18px;color:#111;transform:scaleX(1.0072)">Histogram</span>
<span class="t" id="t_settings" style="left:1220.80px;top:139.00px;font-size:18px;line-height:18px;color:#111;transform:scaleX(0.9594)">Settings</span>
<span class="t" id="g_opt" style="left:1246.30px;top:175.00px;font-size:18px;line-height:18px;color:#111;transform:scaleX(1.0027)">Options</span>
<span class="t" id="s_cam" style="left:42.24px;top:1067.00px;font-size:18px;line-height:18px;color:#111;transform:scaleX(0.9568)">LaseView-LHB (45610002) [Kokyo]</span>
<span class="t" id="s_size" style="left:380.18px;top:1067.00px;font-size:18px;line-height:18px;color:#111;transform:scaleX(1.0176)">1250×1250×8bit</span>
<span class="t" id="s_px" style="left:582.20px;top:1067.00px;font-size:18px;line-height:18px;color:#111;transform:scaleX(1.0277)">40×40µm/px</span>
<span class="t" id="s_fps" style="left:754.70px;top:1067.00px;font-size:18px;line-height:18px;color:#111;transform:scaleX(0.9558)">8 fps</span>
<span class="t" id="s_zoom" style="left:1350.00px;top:1067.00px;font-size:18px;line-height:18px;color:#111;transform:scaleX(0.9272)">80%</span>
<span class="t" id="i_avg" style="left:729.40px;top:73.00px;font-size:32px;line-height:32px;color:#fff;font-weight:bold;transform:scaleX(0.7986)">avg</span>
</div>
</body>
</html>
